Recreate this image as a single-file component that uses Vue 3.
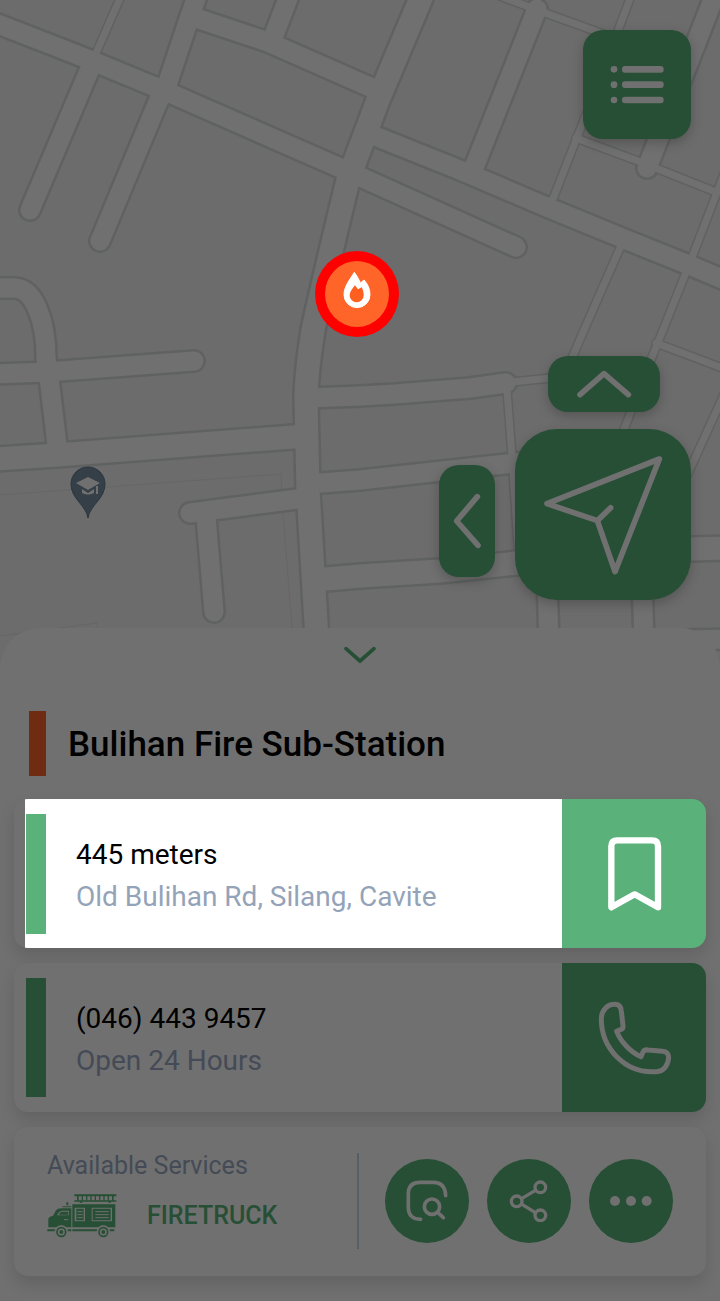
<script setup>
const wide = [
  'M421 -2 L378 100 L348 180 Q322 288 313 330 Q306 375 306 400 L308 490 L319 672',
  'M-5 459 L57 455 L306 436',
  'M315 580 L360 576 L440 571 L517 563 L600 554 L690 549 L725 548'
]
const medium = [
  'M-5 23 L52 45 L90 60 L165 91 L345 170 L516 247',
  'M30 210 L89 71',
  'M100 241 L160 97 L168 82 L188 22 L197 -4',
  'M190 16 L268 42 L370 87',
  'M289 -4 L274 35',
  'M365 132 L460 170 L549 208 L627 240 L689 265 L725 280',
  'M537 9 L473 170',
  'M714 -3 L647 168',
  'M307 398 L360 396 L395 394 L470 388 L506 383',
  'M308 484 L360 480 L515 463 L560 460',
  'M547 580 L550 672',
  'M642 580 L645 672',
  'M-5 288 H15 C34 289 46 320 46 358 L50 386 L57 445',
  'M-5 374 L47 372 L194 361',
  'M190 513 L305 498',
  'M206 517 L214 612',
  'M690 640 L725 639'
]
const narrow = [
  'M121 -4 L94 58',
  'M500 -4 L537 10 L620 40',
  'M631 -4 L592 100 L576 140 L551 204',
  'M576 138 L638 161 L716 192',
  'M724 174 L691 260 L663 330 L652 357 L620 440',
  'M620 248 L584 330 L566 372',
  'M656 343 L725 369',
  'M727 388 L685 480',
  'M512 382 L560 377',
  'M507 390 L512 456 L519 560'
]
</script>

<template>
  <main class="screen">
    <section class="map" aria-label="Map">
      <svg class="streets" viewBox="0 0 720 668" aria-hidden="true">
        <g class="parcel">
          <path d="M0 495 L281 474 L282 500 L292 628" />
          <path d="M0 636 L97 623 V632" />
        </g>
        <g class="edge">
          <path v-for="d in narrow" :key="d" :d="d" stroke-width="10" />
          <path v-for="d in medium" :key="d" :d="d" stroke-width="24" />
          <path v-for="d in wide" :key="d" :d="d" stroke-width="28" />
        </g>
        <g class="road">
          <path v-for="d in narrow" :key="d" :d="d" stroke-width="7" />
          <path v-for="d in medium" :key="d" :d="d" stroke-width="19" />
          <path v-for="d in wide" :key="d" :d="d" stroke-width="23" />
        </g>
        <g>
          <path class="pin" d="M88 518 C86 505 71 499 71 484 A17 17 0 0 1 105 484 C105 499 90 505 88 518Z" />
          <path class="cap" d="M76 483 L88 477 L100 483 L88 490Z M82 489 L88 493 L94 489 V493 Q88 496 82 493Z M96 486 H98 V494 H96Z" />
        </g>
        <ellipse class="alert-ring" cx="357" cy="294" rx="42" ry="43" />
        <ellipse class="alert-core" cx="357" cy="294" rx="32" ry="33" />
        <g transform="translate(300 240) scale(.33333)">
          <path class="flame" d="M163 97 C150 118 132 140 132 164 A39 39 0 0 0 210 164 C210 146 203 132 192 120 L181 129 C177 118 170 107 163 97Z" />
          <path class="flame-hole" d="M165 136 C157 147 149 155 149 166 A21 21 0 0 0 191 166 C191 156 189 149 185 142 L174 148Z" />
        </g>
      </svg>

      <button class="control menu" aria-label="Menu">
        <svg width="54" height="40" viewBox="750 194 162 120">
          <g fill="currentColor">
            <circle cx="762" cy="207" r="10" /><circle cx="762" cy="253" r="10" /><circle cx="762" cy="299" r="10" />
            <rect x="786" y="197" width="125" height="20" rx="9" />
            <rect x="786" y="243" width="125" height="20" rx="9" />
            <rect x="786" y="289" width="125" height="20" rx="9" />
          </g>
        </svg>
      </button>
      <button class="control up" aria-label="Up">
        <svg width="56" height="30" viewBox="648 118 168 90"><path class="line" stroke-width="17" d="M660 195 L732 132 L805 195" /></svg>
      </button>
      <button class="control back" aria-label="Back">
        <svg width="30" height="56" viewBox="277 489 90 168"><path class="line" stroke-width="17" d="M353 500 L291 573 L355 646" /></svg>
      </button>
      <button class="control navigate" aria-label="Navigate">
        <svg width="120" height="120" viewBox="549 374 360 360">
          <path class="line" stroke-width="17" d="M898 386 L561 520 L712 571 L765 724 Z M712 571 L752 532" />
        </svg>
      </button>
    </section>

    <section class="sheet">
      <button class="collapse" aria-label="Collapse">
        <svg width="34" height="18" viewBox="1028 78 102 54"><path class="line" stroke-width="11" d="M1037 86 L1079 123 L1121 86" /></svg>
      </button>
      <h1 class="title">Bulihan Fire Sub-Station</h1>

      <article class="card lit">
        <div class="info">
          <p class="primary">445 meters</p>
          <p class="secondary">Old Bulihan Rd, Silang, Cavite</p>
        </div>
        <button class="action" aria-label="Bookmark">
          <svg width="54" height="74" viewBox="203 140 162 222"><path class="line" stroke-width="19" d="M213 351 V168 Q213 150 231 150 H335 Q353 150 353 168 V351 L283 312 Z" /></svg>
        </button>
      </article>

      <article class="card">
        <div class="info">
          <p class="primary">(046) 443 9457</p>
          <p class="secondary">Open 24 Hours</p>
        </div>
        <button class="action" aria-label="Call">
          <svg width="74" height="74" viewBox="174 630 222 222">
            <path class="line" stroke-width="15" d="M222 640 C238 639 243 648 244 660 L249 704 Q250 714 241 716 L230 721 C242 752 272 784 303 797 L309 783 Q314 775 324 777 L368 781 Q385 782 386 800 C384 824 370 842 350 842 C254 850 184 770 184 684 C184 656 204 640 222 640Z" />
          </svg>
        </button>
      </article>

      <article class="card services">
        <div class="available">
          <h2>Available Services</h2>
          <div class="service">
            <svg width="70" height="44" viewBox="80 224 210 132" aria-hidden="true">
              <g fill="currentColor">
                <path d="M162 225 H288 V231 H162Z M162 243 H288 V247 H162Z" />
                <path d="M170 230 h5 v14 h-5z M184 230 h4 v14 h-4z M197 230 h4 v14 h-4z M210 230 h4 v14 h-4z M223 230 h4 v14 h-4z M236 230 h4 v14 h-4z M249 230 h4 v14 h-4z M262 230 h4 v14 h-4z M275 230 h5 v14 h-5z" />
                <path d="M178 246 h8 v4 h-8z M264 246 h8 v4 h-8z M138 249 h6 v9 h-6z M126 261 h27 v3 h-27z" />
                <path fill-rule="evenodd" d="M156 255 H285 V324 H156Z M163 265 V306 H194 V265Z M214 265 V306 H275 V265Z" />
                <path d="M168 268 h22 v35 h-22z M217 268 h54 v35 h-54z" />
                <path fill-rule="evenodd" d="M153 267 V324 H84 V298 Q86 292 98 289 L107 273 Q112 267 122 267Z M146 274 H124 Q117 275 110 288 H146Z" />
                <path d="M122 277 H144 V286 H115Z M81 330 H106 V336 H81Z M140 330 H153 V336 H140Z M156 330 H231 V336 H156Z M267 330 H282 V336 H267Z" />
              </g>
              <g class="cutout">
                <path d="M171 277 h16 M171 286 h16 M171 295 h16 M225 277 h40 M225 286 h40 M225 295 h40 M131 301 h12" stroke-width="3" />
                <circle cx="123" cy="338" r="20" /><circle cx="249" cy="338" r="20" />
              </g>
              <g fill="none" stroke="currentColor" stroke-width="5">
                <circle cx="123" cy="338" r="13" /><circle cx="249" cy="338" r="13" />
              </g>
              <g fill="currentColor"><circle cx="123" cy="338" r="6" /><circle cx="249" cy="338" r="6" /></g>
            </svg>
            <span>FIRETRUCK</span>
          </div>
        </div>
        <div class="tools">
          <button aria-label="Preview">
            <svg width="42" height="42" viewBox="137 179 126 126">
              <path class="line" stroke-width="11" d="M181 297 C157 297 144 284 144 262 V220 C144 196 157 186 180 186 H219 C243 186 255 199 256 226 M234 278 L249 292" />
              <circle class="line" stroke-width="11" cx="215" cy="259" r="23" />
            </svg>
          </button>
          <button aria-label="Share">
            <svg width="42" height="42" viewBox="444 179 126 126">
              <path class="line" stroke-width="10" d="M486 234 L525 211 M486 252 L525 276" />
              <g class="line" stroke-width="10"><circle cx="470" cy="243" r="16" /><circle cx="541" cy="201" r="16" /><circle cx="541" cy="285" r="16" /></g>
            </svg>
          </button>
          <button aria-label="More">
            <svg width="42" height="42" viewBox="750 180 126 126"><g fill="currentColor"><circle cx="765" cy="243" r="15" /><circle cx="813" cy="243" r="15" /><circle cx="860" cy="243" r="15" /></g></svg>
          </button>
        </div>
      </article>
    </section>
  </main>
</template>

<style>
body {
  margin: 0;
  background: #707070;
}
</style>

<style scoped>
.screen {
  --surface: #707070;
  --green: #264f35;
  --muted: #444b56;
  font-family: Roboto, "Liberation Sans", sans-serif;
  color: #000;
  background: var(--surface);
}
button {
  display: flex;
  align-items: center;
  justify-content: center;
  padding: 0;
  border: 0;
  color: var(--surface);
  background: var(--green);
  cursor: pointer;
}
svg {
  display: block;
}
.line {
  fill: none;
  stroke: currentColor;
  stroke-linecap: round;
  stroke-linejoin: round;
}
.map {
  position: relative;
  background: #6c6c6c;
}
.streets {
  width: 100%;
  height: auto;
}
.edge,
.road,
.parcel {
  fill: none;
  stroke-linecap: round;
}
.edge {
  stroke: #606262;
}
.road {
  stroke: #707070;
}
.parcel {
  stroke: #656666;
}
.pin {
  fill: #343f47;
  stroke: #2b363e;
}
.cap {
  fill: #707070;
}
.alert-ring {
  fill: #f00;
}
.alert-core {
  fill: #ff6428;
}
.flame {
  fill: #fff;
  stroke: #fff;
  stroke-width: 3;
  stroke-linejoin: round;
}
.flame-hole {
  fill: #ff6020;
}
.control {
  position: absolute;
  box-shadow: 0 4px 12px rgba(0, 0, 0, 0.22);
}
.menu {
  top: 30px;
  right: 29px;
  width: 108px;
  height: 109px;
  border-radius: 20px;
}
.up {
  top: 356px;
  right: 60px;
  width: 112px;
  height: 56px;
  border-radius: 20px;
}
.back {
  top: 465px;
  right: 225px;
  width: 56px;
  height: 112px;
  border-radius: 20px;
}
.navigate {
  top: 429px;
  right: 29px;
  width: 176px;
  height: 171px;
  border-radius: 42px;
}
.sheet {
  position: relative;
  margin-top: -40px;
  padding: 17px 14px 25px;
  border-radius: 40px 40px 0 0;
  background: var(--surface);
}
.collapse {
  width: 64px;
  height: 20px;
  margin: 0 auto;
  color: var(--green);
  background: none;
}
.title {
  margin: 46px 15px 23px;
  padding: 3px 0 0 22px;
  border-left: 17px solid #702c13;
  font-size: 35px;
  font-weight: 500;
  line-height: 62px;
}
.card {
  display: flex;
  min-height: 149px;
  margin-bottom: 15px;
  border-radius: 14px;
  background: var(--surface);
  box-shadow: 0 8px 16px rgba(0, 0, 0, 0.12);
  overflow: hidden;
}
.info {
  display: flex;
  flex: 1;
  flex-direction: column;
  justify-content: center;
  margin: 15px 12px;
  padding: 4px 0 0 30px;
  border-left: 20px solid var(--green);
  font-size: 28px;
  line-height: 42px;
}
.primary,
.secondary {
  margin: 0;
}
.secondary {
  color: var(--muted);
}
.action {
  width: 144px;
  padding-left: 2px;
}
.lit .info {
  margin: 0 0 0 11px;
  padding-left: 51px;
  border: 0;
  background: linear-gradient(#5ab27a, #5ab27a) 1px 15px / 20px 120px no-repeat #fff;
}
.lit .secondary {
  color: #94a3b8;
}
.lit .action {
  color: #fff;
  background: #5ab27a;
}
.services {
  align-items: center;
  justify-content: space-between;
  min-height: 147px;
  margin-bottom: 0;
  padding: 0 33px 2px;
}
.available {
  padding-bottom: 14px;
}
.available h2 {
  margin: 0;
  color: var(--muted);
  font-size: 25px;
  font-weight: 400;
  line-height: 32px;
}
.service {
  display: flex;
  align-items: center;
  gap: 30px;
  margin-top: 12px;
  color: var(--green);
  font-size: 25px;
  font-weight: 500;
}
.cutout {
  fill: var(--surface);
  stroke: var(--surface);
}
.tools {
  display: flex;
  align-items: center;
  gap: 18px;
  min-height: 96px;
  padding-left: 26px;
  border-left: 2px solid #595e62;
}
.tools button {
  width: 84px;
  height: 84px;
  border-radius: 50%;
}
</style>
